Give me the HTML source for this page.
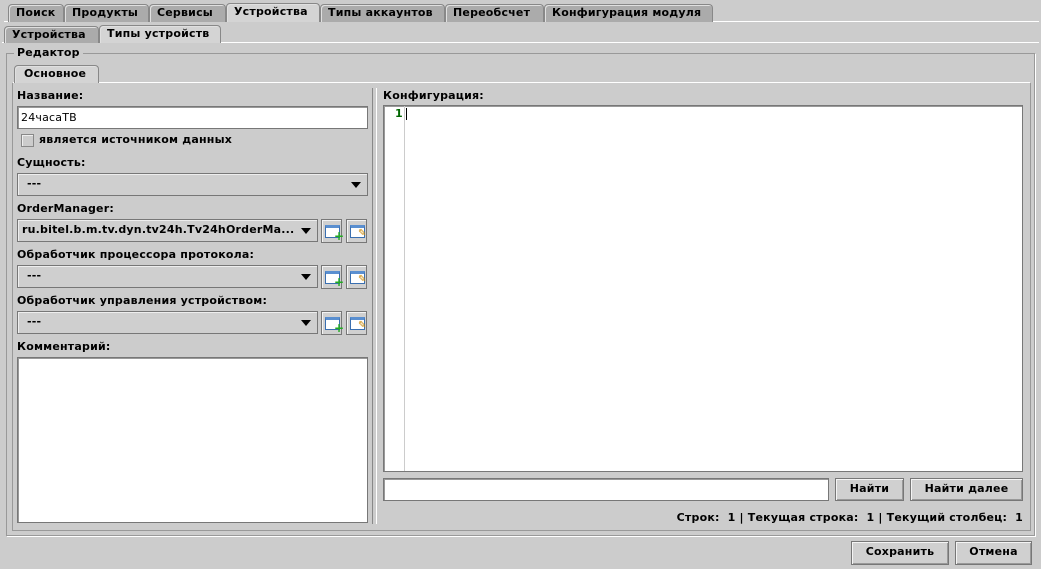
<!DOCTYPE html>
<html><head><meta charset="utf-8"><style>
*{box-sizing:border-box;margin:0;padding:0}
body{width:1041px;height:569px;background:#cccccc;font-family:"DejaVu Sans","Liberation Sans",sans-serif;font-size:11px;font-weight:bold;color:#000;position:relative;overflow:hidden;letter-spacing:0.2px}
.a{position:absolute}
.tab{position:absolute;height:18px;border:1px solid #888;border-bottom:none;background:#ababab;line-height:15px;padding-left:7px;border-radius:4px 4px 0 0;box-shadow:inset 1px 1px 0 #e0e0e0}
.tab.s{background:#d4d4d4;height:19px}
.inp{position:absolute;background:#fff;border:1px solid #777;box-shadow:inset 1px 1px 0 #999}
.cb{position:absolute;border:1px solid #777;background:#cfcfcf;box-shadow:inset 1px 1px 0 #eee;line-height:20px;padding-left:9px}
.cb:after{content:"";position:absolute;right:6px;top:8px;border-left:5px solid transparent;border-right:5px solid transparent;border-top:6px solid #000}
.btn{position:absolute;border:1px solid #777;background:#d0d0d0;box-shadow:inset 1px 1px 0 #f4f4f4,inset -1px -1px 0 #999;text-align:center;line-height:20px}
.ib{position:absolute;width:21px;height:24px;border:1px solid #777;background:#d0d0d0;box-shadow:inset 1px 1px 0 #f4f4f4}
.ib i{position:absolute;left:3px;top:5px;width:15px;height:13px;border:1px solid #3a6fb0;background:#fff;border-top:3px solid #5a8fd0}
.lbl{position:absolute}
</style></head><body>
<div class="a" style="left:4px;top:21px;width:1035px;height:1px;background:#fff"></div>
<div class="tab" style="left:8px;top:4px;width:56px">Поиск</div>
<div class="tab" style="left:64px;top:4px;width:85px">Продукты</div>
<div class="tab" style="left:149px;top:4px;width:77px">Сервисы</div>
<div class="tab s" style="left:226px;top:3px;width:94px">Устройства</div>
<div class="tab" style="left:320px;top:4px;width:125px">Типы аккаунтов</div>
<div class="tab" style="left:445px;top:4px;width:99px">Переобсчет</div>
<div class="tab" style="left:544px;top:4px;width:169px">Конфигурация модуля</div>

<div class="a" style="left:2px;top:42px;width:1037px;height:1px;background:#fff"></div>
<div class="tab" style="left:4px;top:26px;width:95px;height:17px">Устройства</div>
<div class="tab s" style="left:99px;top:25px;width:122px;height:18px">Типы устройств</div>

<div class="a" style="left:6px;top:53px;width:1029px;height:483px;border:1px solid #999;box-shadow:1px 1px 0 #fff"></div>
<div class="a" style="left:14px;top:46px;background:#cccccc;padding:0 3px;font-weight:bold">Редактор</div>

<div class="a" style="left:12px;top:82px;width:1019px;height:449px;border:1px solid #999;border-top:1px solid #fff"></div>
<div class="tab s" style="left:14px;top:65px;width:85px;height:18px;padding-left:9px">Основное</div>

<div class="lbl" style="left:17px;top:89px">Название:</div>
<div class="inp" style="left:17px;top:106px;width:351px;height:23px;font-weight:normal;line-height:21px;padding-left:3px">24часаТВ</div>
<div class="a" style="left:21px;top:134px;width:13px;height:13px;border:1px solid #888;background:#ccc;box-shadow:inset 1px 1px 0 #eee"></div>
<div class="lbl" style="left:39px;top:133px">является источником данных</div>
<div class="lbl" style="left:17px;top:156px">Сущность:</div>
<div class="cb" style="left:17px;top:173px;width:351px;height:23px">---</div>
<div class="lbl" style="left:17px;top:202px">OrderManager:</div>
<div class="cb" style="left:17px;top:219px;width:301px;height:23px;padding-left:4px">ru.bitel.b.m.tv.dyn.tv24h.Tv24hOrderMa...</div>
<div class="ib" style="left:321px;top:219px"><i></i><span class="a" style="left:12px;top:12px;color:#2a2;font-size:12px;line-height:8px">+</span></div>
<div class="ib" style="left:346px;top:219px"><i></i><span class="a" style="left:11px;top:8px;color:#c80;font-size:10px">✎</span></div>
<div class="lbl" style="left:17px;top:248px">Обработчик процессора протокола:</div>
<div class="cb" style="left:17px;top:265px;width:301px;height:23px">---</div>
<div class="ib" style="left:321px;top:265px"><i></i><span class="a" style="left:12px;top:12px;color:#2a2;font-size:12px;line-height:8px">+</span></div>
<div class="ib" style="left:346px;top:265px"><i></i><span class="a" style="left:11px;top:8px;color:#c80;font-size:10px">✎</span></div>
<div class="lbl" style="left:17px;top:294px">Обработчик управления устройством:</div>
<div class="cb" style="left:17px;top:311px;width:301px;height:23px">---</div>
<div class="ib" style="left:321px;top:311px"><i></i><span class="a" style="left:12px;top:12px;color:#2a2;font-size:12px;line-height:8px">+</span></div>
<div class="ib" style="left:346px;top:311px"><i></i><span class="a" style="left:11px;top:8px;color:#c80;font-size:10px">✎</span></div>
<div class="lbl" style="left:17px;top:340px">Комментарий:</div>
<div class="inp" style="left:17px;top:357px;width:351px;height:166px"></div>

<div class="a" style="left:372px;top:88px;width:5px;height:436px;border-left:1px solid #888;border-right:1px solid #fff"></div>

<div class="lbl" style="left:383px;top:89px">Конфигурация:</div>
<div class="inp" style="left:383px;top:105px;width:640px;height:367px"></div>
<div class="a" style="left:404px;top:106px;width:1px;height:365px;background:#ccc"></div>
<div class="a" style="left:395px;top:107px;color:#060">1</div>
<div class="a" style="left:406px;top:108px;width:1px;height:12px;background:#000"></div>
<div class="inp" style="left:383px;top:478px;width:446px;height:23px"></div>
<div class="btn" style="left:835px;top:478px;width:69px;height:23px">Найти</div>
<div class="btn" style="left:910px;top:478px;width:113px;height:23px">Найти далее</div>
<div class="a" style="right:18px;top:511px;white-space:pre;letter-spacing:0.2px">Строк:  1 | Текущая строка:  1 | Текущий столбец:  1</div>

<div class="btn" style="left:851px;top:541px;width:98px;height:24px">Сохранить</div>
<div class="btn" style="left:955px;top:541px;width:77px;height:24px">Отмена</div>
</body></html>
